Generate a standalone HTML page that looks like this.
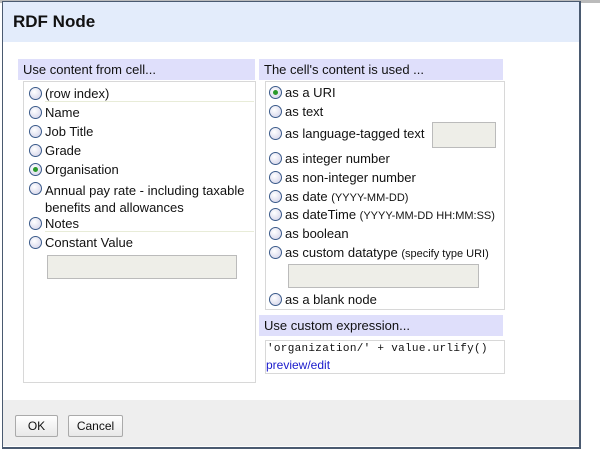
<!DOCTYPE html>
<html><head><style>
body{margin:0;width:600px;height:451px;overflow:hidden;background:#fff;font-family:"Liberation Sans",sans-serif;font-size:12px;color:#111;position:relative}
.a{position:absolute}
.r{position:absolute;white-space:nowrap;line-height:14px;font-size:13px}
.r i{position:absolute;left:-16px;top:0;width:11px;height:11px;border:1px solid #3a5a8a;border-radius:50%;background:radial-gradient(circle at 40% 35%,#fff,#dde 70%)}
.r i.on:after{content:"";position:absolute;left:3px;top:3px;width:5px;height:5px;border-radius:50%;background:#2a9a2a}
.hd{position:absolute;background:#dfdffb;line-height:21px;padding-left:5px;font-size:13px}
.box{position:absolute;border:1px solid #d8d8d8}
.inp{position:absolute;background:#eeeee8;border:1px solid #bbb}
.btn{position:absolute;border:1px solid #aaa;border-radius:2px;background:linear-gradient(#fff,#e8e8e8);text-align:center;line-height:20px;font-size:12px}
</style></head><body>
<div class="a" style="left:0;top:0;width:600px;height:3px;background:#bbb"></div>
<div class="a" style="left:2px;top:1px;width:576px;height:445px;border:1px solid #4a5a70;border-width:1px 2px 2px 1px;background:#fff"></div>
<div class="a" style="left:3px;top:2px;width:576px;height:40px;background:#e3ecfb"></div>
<div class="a" style="left:13px;top:12px;font-size:17px;font-weight:bold">RDF Node</div>
<div class="a" style="left:3px;top:400px;width:576px;height:46px;background:#eee"></div>
<div class="btn" style="left:15px;top:415px;width:41px;height:20px">OK</div>
<div class="btn" style="left:68px;top:415px;width:53px;height:20px">Cancel</div>

<div class="hd" style="left:18px;top:59px;width:232px">Use content from cell...</div>
<div class="box" style="left:23px;top:81px;width:231px;height:300px"></div>
<div class="a" style="left:45px;top:101px;width:209px;height:1px;background:#e8ecd8"></div>
<div class="a" style="left:45px;top:231px;width:209px;height:1px;background:#e8ecd8"></div>
<div class="r" style="left:45px;top:87px"><i></i>(row index)</div>
<div class="r" style="left:45px;top:106px"><i></i>Name</div>
<div class="r" style="left:45px;top:125px"><i></i>Job Title</div>
<div class="r" style="left:45px;top:144px"><i></i>Grade</div>
<div class="r" style="left:45px;top:163px"><i class="on"></i>Organisation</div>
<div class="r" style="left:45px;top:182px;line-height:17px"><i></i>Annual pay rate - including taxable<br>benefits and allowances</div>
<div class="r" style="left:45px;top:217px"><i></i>Notes</div>
<div class="r" style="left:45px;top:236px"><i></i>Constant Value</div>
<div class="inp" style="left:47px;top:255px;width:188px;height:22px"></div>

<div class="hd" style="left:259px;top:59px;width:239px">The cell's content is used ...</div>
<div class="box" style="left:265px;top:81px;width:238px;height:227px"></div>
<div class="r" style="left:285px;top:86px"><i class="on"></i>as a URI</div>
<div class="r" style="left:285px;top:105px"><i></i>as text</div>
<div class="r" style="left:285px;top:127px"><i></i>as language-tagged text</div>
<div class="inp" style="left:432px;top:122px;width:62px;height:24px"></div>
<div class="r" style="left:285px;top:152px"><i></i>as integer number</div>
<div class="r" style="left:285px;top:171px"><i></i>as non-integer number</div>
<div class="r" style="left:285px;top:190px"><i></i>as date <span style="font-size:11px">(YYYY-MM-DD)</span></div>
<div class="r" style="left:285px;top:208px"><i></i>as dateTime <span style="font-size:11px">(YYYY-MM-DD HH:MM:SS)</span></div>
<div class="r" style="left:285px;top:227px"><i></i>as boolean</div>
<div class="r" style="left:285px;top:246px"><i></i>as custom datatype <span style="font-size:11px">(specify type URI)</span></div>
<div class="inp" style="left:288px;top:264px;width:189px;height:22px"></div>
<div class="r" style="left:285px;top:293px"><i></i>as a blank node</div>

<div class="hd" style="left:259px;top:315px;width:239px">Use custom expression...</div>
<div class="box" style="left:265px;top:340px;width:238px;height:32px"></div>
<div class="a" style="left:267px;top:343px;font-family:'Liberation Mono',monospace;font-size:11px;letter-spacing:0.3px">'organization/' + value.urlify()</div>
<div class="a" style="left:266px;top:358px;color:#1a1acc">preview/edit</div>
</body></html>
